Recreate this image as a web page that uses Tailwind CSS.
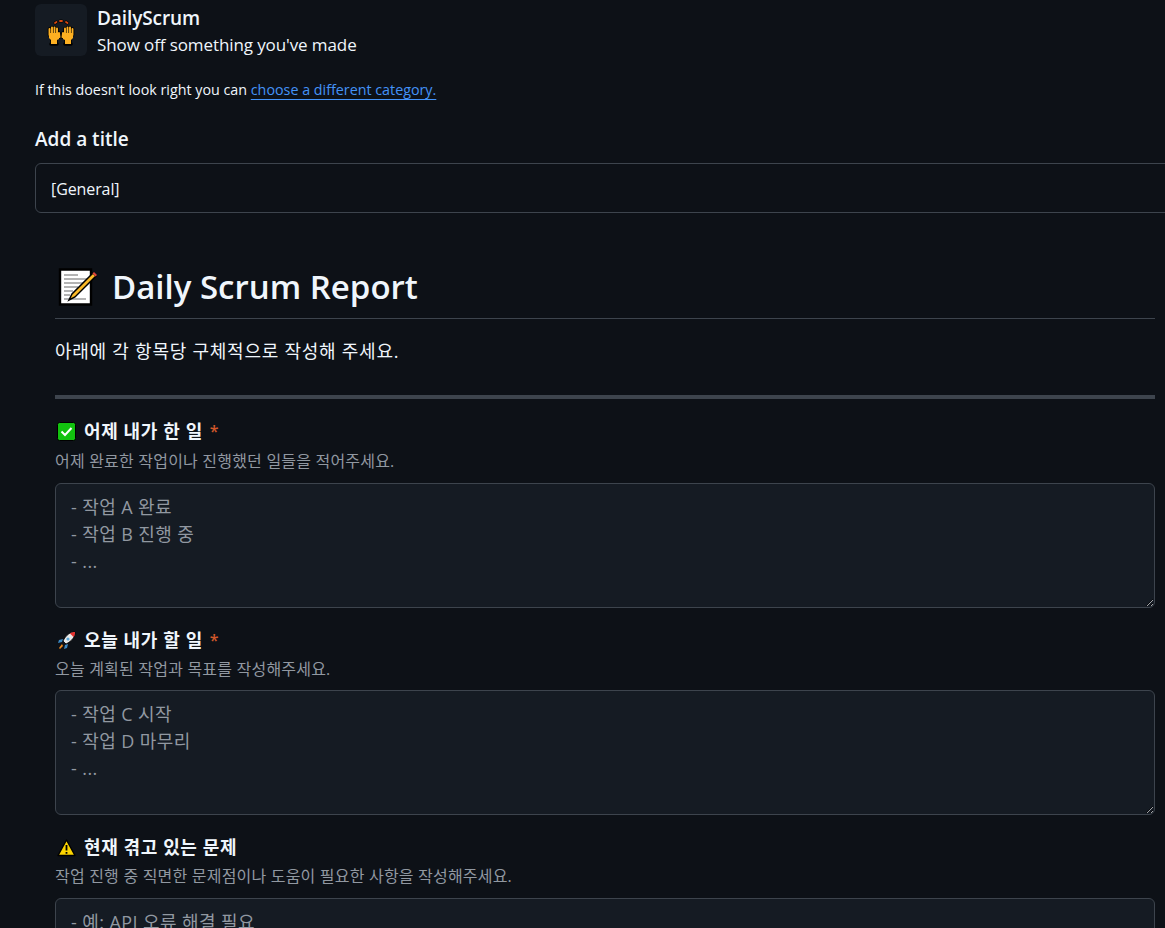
<!DOCTYPE html>
<html lang="ko">
<head>
<meta charset="utf-8">
<title>New discussion</title>
<script src="https://cdn.jsdelivr.net/npm/@tailwindcss/browser@4"></script>
</head>
<body class="bg-[#0d1117]">
<div class="h-[928px] w-[1165px] overflow-hidden bg-[#0d1117] text-[#f0f6fc] font-['Open_Sans','Noto_Sans_CJK_KR',sans-serif]">
  <div class="w-[1140px] ml-[35px] pt-[4px]">

    <!-- Category -->
    <div class="flex items-start gap-[10px]">
      <div class="w-[52px] h-[52px] rounded-md bg-[#151b23] flex items-center justify-center">
        <svg class="mt-[4px]" width="28" height="28" viewBox="0 0 28 28" fill="none" stroke-linecap="round">
          <path d="M8 5l1.500-1M13 3h2M19 4l1.500 1" stroke="#000" stroke-width="3"/>
          <path d="M8 5l1.500-1M13 3h2M19 4l1.500 1" stroke="#d9480f" stroke-width="1.800"/>
          <g stroke="#000" stroke-width="3.600">
            <path d="M2.500 17V11M5 17V9.500M7.500 17V9.500M10 17V10.500M12.500 19l-.5-4M4 26h6M5 18v8M9 18v8"/>
            <path d="M25.500 17V11M23 17V9.500M20.500 17V9.500M18 17V10.500M15.500 19l.5-4M18 26h6M19 18v8M23 18v8"/>
          </g>
          <path d="M2 15h10v6l-2 1v4H4v-4l-2-2zM26 15H16v6l2 1v4h6v-4l2-2z" fill="#fdb022"/>
          <g stroke="#fdb022" stroke-width="1.900">
            <path d="M2.500 17V11M5 17V9.500M7.500 17V9.500M10 17V10.500M12.500 19l-.5-4"/>
            <path d="M25.500 17V11M23 17V9.500M20.500 17V9.500M18 17V10.500M15.500 19l.5-4"/>
          </g>
        </svg>
      </div>
      <div class="flex flex-col">
        <span class="text-[19px] leading-[28px] font-semibold tracking-[-0.1px]">DailyScrum</span>
        <span class="text-[17px] leading-[26px] tracking-[-0.1px]">Show off something you've made</span>
      </div>
    </div>

    <p class="mt-[21px] text-[14.3px] leading-[22px]">If this doesn't look right you can <a class="text-[#4493f8] underline underline-offset-[4px] [text-decoration-skip-ink:none]">choose a different category.</a></p>

    <h3 class="mt-[24px] text-[19px] leading-[28px] font-semibold">Add a title</h3>
    <input class="mt-[10px] block w-full h-[50px] px-[15px] pt-[2px] text-[16px] tracking-[-0.1px] bg-[#0d1117] border border-[#3d444d] rounded-md outline-none" value="[General]">

    <!-- Form body -->
    <div class="px-[20px] pt-[46px]">
      <h1 class="flex items-center gap-[14px] h-[55px] border-b border-[#3d444d] pb-[4px] text-[33px] font-semibold box-content">
        <svg class="ml-[3px]" width="40" height="38" viewBox="0 0 40 38">
          <path d="M2 1.500h31v35H2z" fill="#fff" stroke="#000" stroke-width="2.400"/>
          <path d="M6 7h14M6 11h23M6 15h21M6 19h14M6 23h9M6 27h6M6 31h22" stroke="#9a9a9a" stroke-width="1.500"/>
          <path d="M35 5L14 26l-3 6 6-3L38 8z" fill="#fbb928" stroke="#000" stroke-width="1.500"/>
          <path d="M34.500 5.500l3 3 1.500-1.500-3-3z" fill="#e0463c"/>
        </svg>
        <span>Daily Scrum Report</span>
      </h1>
      <p class="mt-[19px] text-[18px] leading-[26px] tracking-[0.75px]">아래에 각 항목당 구체적으로 작성해 주세요.</p>
      <div class="mt-[31px] h-[4px] bg-[#3d444d]"></div>

      <!-- Yesterday -->
      <div class="mt-[20px] flex items-center h-[24px] text-[18px] font-semibold tracking-[0.6px]">
        <svg class="ml-[2px] mr-[8px]" width="19" height="19" viewBox="0 0 19 19">
          <rect x=".5" y=".5" width="18" height="18" rx="2" fill="#12c20f" stroke="#000"/>
          <path d="M4.500 9.500l3.500 3.500 6.500-7" fill="none" stroke="#fff" stroke-width="2"/>
        </svg>
        <span>어제 내가 한 일</span><span class="ml-[7px] text-[16px] text-[#d1572a]">*</span>
      </div>
      <p class="mt-[7.5px] text-[16px] leading-[20px] text-[#9198a1] tracking-[0.2px]">어제 완료한 작업이나 진행했던 일들을 적어주세요.</p>
      <textarea class="mt-[12.5px] block w-[1100px] h-[125px] py-[10px] px-[15px] text-[18px] leading-[27px] tracking-[0.4px] bg-[#151b23] border border-[#3d444d] rounded-md outline-none placeholder:text-[#9198a1]" placeholder="- 작업 A 완료&#10;- 작업 B 진행 중&#10;- ..."></textarea>

      <!-- Today -->
      <div class="mt-[20px] flex items-center h-[24px] text-[18px] font-semibold tracking-[0.6px]">
        <svg class="ml-[2px] mr-[8px]" width="19" height="19" viewBox="0 0 19 19">
          <path d="M18 1c-5 0-9 3-12 9l3 3c6-3 9-7 9-12z" fill="#e8e8e8" stroke="#000" stroke-width=".8"/>
          <path d="M18 1c-2 0-4 .5-5 1.500L16.500 6c1-1 1.500-3 1.500-5z" fill="#e8312f"/>
          <circle cx="11" cy="8" r="1.600" fill="#5aa7d8"/>
          <path d="M6 8L2 9l-1 3 4-1zM11 13l-1 4-3 1 1-4z" fill="#3b88c3"/>
          <path d="M5 13l-3 4 1 1 3-3z" fill="#f08a1d"/>
        </svg>
        <span>오늘 내가 할 일</span><span class="ml-[7px] text-[16px] text-[#d1572a]">*</span>
      </div>
      <p class="mt-[7px] text-[16px] leading-[20px] text-[#9198a1] tracking-[0.2px]">오늘 계획된 작업과 목표를 작성해주세요.</p>
      <textarea class="mt-[11px] block w-[1100px] h-[125px] py-[10px] px-[15px] text-[18px] leading-[27px] tracking-[0.4px] bg-[#151b23] border border-[#3d444d] rounded-md outline-none placeholder:text-[#9198a1]" placeholder="- 작업 C 시작&#10;- 작업 D 마무리&#10;- ..."></textarea>

      <!-- Blockers -->
      <div class="mt-[20px] flex items-center h-[24px] text-[18px] font-semibold tracking-[0.6px]">
        <svg class="ml-[2px] mr-[8px]" width="19" height="19" viewBox="0 0 19 19">
          <path d="M9.500 2L18 17.500H1z" fill="#fcd400" stroke="#000" stroke-width="1.400" stroke-linejoin="round"/>
          <path d="M9.500 7v5.500M9.500 14v1.800" stroke="#000" stroke-width="1.800"/>
        </svg>
        <span>현재 겪고 있는 문제</span>
      </div>
      <p class="mt-[7px] text-[16px] leading-[20px] text-[#9198a1] tracking-[0.2px]">작업 진행 중 직면한 문제점이나 도움이 필요한 사항을 작성해주세요.</p>
      <textarea class="mt-[12px] block w-[1100px] h-[125px] py-[10px] px-[15px] text-[18px] leading-[27px] tracking-[0.4px] bg-[#151b23] border border-[#3d444d] rounded-md outline-none placeholder:text-[#9198a1]" placeholder="- 예: API 오류 해결 필요"></textarea>
    </div>
  </div>
</div>
</body>
</html>
